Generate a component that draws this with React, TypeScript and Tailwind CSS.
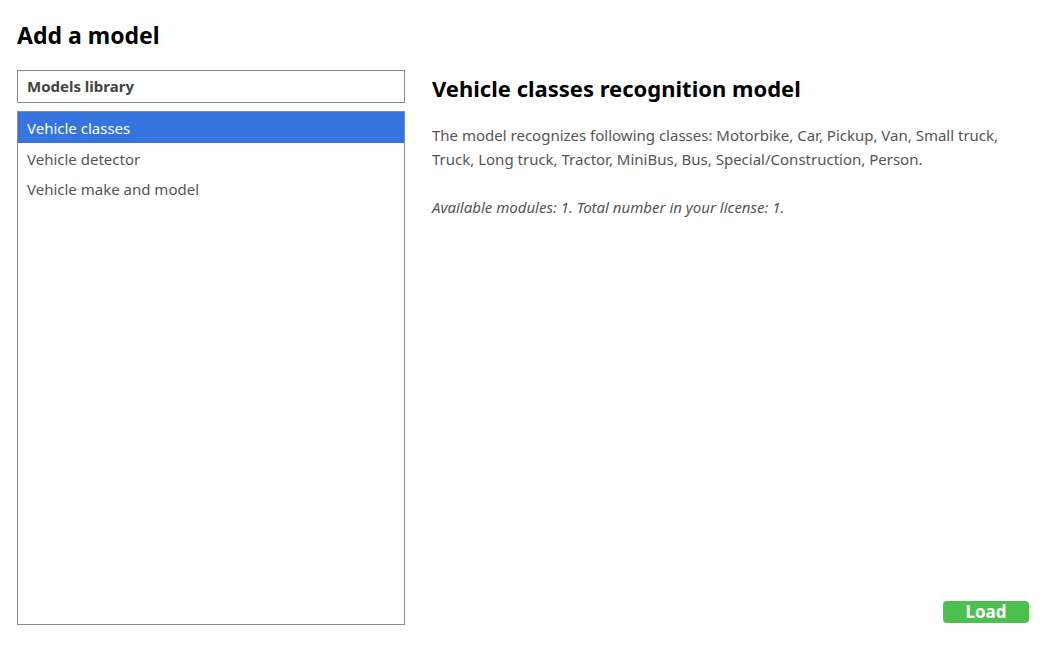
import React from "react";

const models = ["Vehicle classes", "Vehicle detector", "Vehicle make and model"];

export default function App() {
  const selected = 0;
  return (
    <div className="h-[658px] w-[1043px] bg-white pl-[17px] pr-[14px] pt-[19px] pb-[33px] flex flex-col" style={{ fontFamily: '"Noto Sans", "Open Sans", sans-serif' }}>
      <h1 className="text-[23px] font-bold leading-[32px] text-black">Add a model</h1>
      <div className="mt-[19px] flex flex-1 min-h-0 gap-[27px]">
        <div className="flex w-[388px] flex-col">
          <div className="flex h-[33px] items-center border border-[#8a8a8a] px-[9px] text-[15px] font-bold text-[#444]">
            Models library
          </div>
          <ul className="mt-[8px] flex-1 border border-[#8a8a8a]">
            {models.map((m, i) => (
              <li
                key={m}
                className={
                  i === selected
                    ? "flex h-[31px] items-center bg-[#3574dc] px-[9px] pt-[2px] text-[15px] text-white"
                    : "flex h-[30px] items-center px-[9px] pt-[2px] text-[15px] text-[#555]"
                }
              >
                {m}
              </li>
            ))}
          </ul>
        </div>
        <div className="flex flex-1 flex-col">
          <h2 className="mt-[2px] text-[22px] font-bold leading-[32px] text-black">Vehicle classes recognition model</h2>
          <p className="mt-[19px] text-[15px] leading-[24px] text-[#555]">
            The model recognizes following classes: Motorbike, Car, Pickup, Van, Small truck, Truck, Long truck, Tractor, MiniBus, Bus, Special/Construction, Person.
          </p>
          <p className="mt-[24px] text-[15px] italic leading-[24px] text-[#555]">
            Available modules: 1. Total number in your license: 1.
          </p>
          <div className="mt-auto mb-[2px] flex justify-end">
            <button className="h-[22px] w-[86px] rounded-[4px] bg-[#4cbf4f] text-[17px] font-bold leading-[22px] text-white">
              Load
            </button>
          </div>
        </div>
      </div>
    </div>
  );
}
